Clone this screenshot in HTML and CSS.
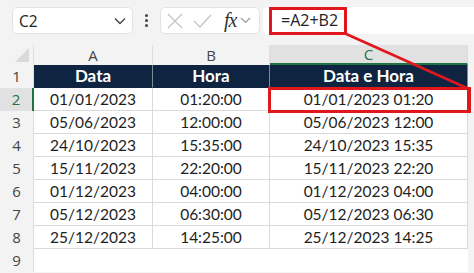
FILE: index.html
```html
<!DOCTYPE html>
<html lang="pt">
<head>
    <meta charset="UTF-8">
    <title>Data e Hora</title>
    <link rel="stylesheet" href="styles.css">
</head>
<body>
    <div class="toolbar">
        <div class="name-box">
            <span>C2</span>
            <svg class="chev" width="12" height="8" viewBox="0 0 12 8"><path d="M1 1.5 L6 6.5 L11 1.5" fill="none" stroke="#444" stroke-width="1.4"/></svg>
        </div>
        <div class="dots"><i></i><i></i><i></i></div>
        <div class="fx-box">
            <svg width="16" height="16" viewBox="0 0 16 16"><path d="M1 1 L15 15 M15 1 L1 15" stroke="#c4c4c4" stroke-width="1.3"/></svg>
            <svg width="19" height="14" viewBox="0 0 19 14"><path d="M1 7 L7 13 L18 1" fill="none" stroke="#c4c4c4" stroke-width="1.3"/></svg>
            <span class="fx">fx</span>
            <svg width="11" height="7" viewBox="0 0 11 7"><path d="M1 1 L5.5 5.5 L10 1" fill="none" stroke="#999" stroke-width="1.2"/></svg>
        </div>
        <div class="formula">=A2+B2</div>
    </div>

    <div class="sheet">
        <div class="corner"><span class="tri"></span></div>
        <div class="col-head">A</div>
        <div class="col-head">B</div>
        <div class="col-head active">C</div>
        <div class="col-head rest"></div>

        <div class="row-head">1</div>
        <div class="cell title">Data</div>
        <div class="cell title">Hora</div>
        <div class="cell title">Data e Hora</div>
        <div class="blank"></div>

        <div class="row-head active">2</div>
        <div class="cell">01/01/2023</div>
        <div class="cell">01:20:00</div>
        <div class="cell selected">01/01/2023 01:20</div>
        <div class="blank"></div>

        <div class="row-head">3</div>
        <div class="cell">05/06/2023</div>
        <div class="cell">12:00:00</div>
        <div class="cell">05/06/2023 12:00</div>
        <div class="blank"></div>

        <div class="row-head">4</div>
        <div class="cell">24/10/2023</div>
        <div class="cell">15:35:00</div>
        <div class="cell">24/10/2023 15:35</div>
        <div class="blank"></div>

        <div class="row-head">5</div>
        <div class="cell">15/11/2023</div>
        <div class="cell">22:20:00</div>
        <div class="cell">15/11/2023 22:20</div>
        <div class="blank"></div>

        <div class="row-head">6</div>
        <div class="cell">01/12/2023</div>
        <div class="cell">04:00:00</div>
        <div class="cell">01/12/2023 04:00</div>
        <div class="blank"></div>

        <div class="row-head">7</div>
        <div class="cell">05/12/2023</div>
        <div class="cell">06:30:00</div>
        <div class="cell">05/12/2023 06:30</div>
        <div class="blank"></div>

        <div class="row-head">8</div>
        <div class="cell">25/12/2023</div>
        <div class="cell">14:25:00</div>
        <div class="cell">25/12/2023 14:25</div>
        <div class="blank"></div>

        <div class="row-head">9</div>
        <div class="empty"></div>
        <div class="empty"></div>
        <div class="empty"></div>
        <div class="blank"></div>
    </div>

    <!-- red annotation -->
    <div class="mark mark-formula"></div>
    <div class="mark mark-cell"></div>
    <svg class="arrow" width="474" height="273" viewBox="0 0 474 273">
        <line x1="344" y1="33" x2="469" y2="89" stroke="#e0181e" stroke-width="2.5"/>
    </svg>
</body>
</html>
```

FILE: styles.css
```css
body {
    margin: 0;
    width: 474px;
    height: 273px;
    overflow: hidden;
    background-color: #f3f3f3;
    font-family: "Open Sans", sans-serif;
    position: relative;
}

.toolbar {
    height: 45px;
    box-sizing: border-box;
    padding: 7px 0 0 12px;
    display: flex;
    align-items: flex-start;
}

.name-box {
    width: 121px;
    height: 27px;
    box-sizing: border-box;
    background-color: #ffffff;
    border: 1px solid #e3e3e3;
    border-radius: 5px;
    display: flex;
    align-items: center;
    justify-content: space-between;
    padding: 0 6px 0 6px;
    font-size: 15.5px;
    color: #222;
}

.dots {
    width: 27px;
    height: 27px;
    display: flex;
    flex-direction: column;
    align-items: center;
    justify-content: center;
    gap: 2px;
}

.dots i {
    width: 3px;
    height: 3px;
    border-radius: 50%;
    background-color: #444;
}

.fx-box {
    width: 100px;
    height: 27px;
    box-sizing: border-box;
    background-color: #ffffff;
    border: 1px solid #e3e3e3;
    border-radius: 5px;
    display: flex;
    align-items: center;
    gap: 10px;
    padding-left: 6px;
}

.fx {
    font-family: "Liberation Serif", serif;
    font-style: italic;
    font-size: 20px;
    color: #333;
    margin-left: 2px;
    margin-right: -6px;
    letter-spacing: -1px;
}

.formula {
    flex: 1;
    height: 27px;
    margin-left: 3px;
    background-color: #ffffff;
    border-radius: 5px 0 0 5px;
    font-size: 16px;
    color: #222;
    line-height: 27px;
    padding-left: 18px;
}

.sheet {
    display: grid;
    grid-template-columns: 34px 119px 117px 198px 6px;
    grid-template-rows: 20px repeat(9, 23px);
    font-family: "Lato", sans-serif;
}

.corner {
    position: relative;
    border-right: 1px solid #dcdcdc;
}

.corner .tri {
    position: absolute;
    right: 4px;
    bottom: 3px;
    width: 0;
    height: 0;
    border-left: 14px solid transparent;
    border-bottom: 14px solid #dadada;
}

.col-head {
    font-family: "Open Sans", sans-serif;
    font-size: 15px;
    color: #444;
    text-align: center;
    line-height: 20px;
    border-right: 1px solid #dcdcdc;
    background-color: #f3f3f3;
}

.col-head.active {
    background-color: #e1e1e1;
    color: #217346;
    border-bottom: 2px solid #217346;
    line-height: 19px;
}

.col-head.rest {
    border-right: none;
}

.row-head {
    font-family: "Open Sans", sans-serif;
    font-size: 15px;
    color: #444;
    text-align: center;
    line-height: 23px;
    border-right: 1px solid #dcdcdc;
}

.row-head.active {
    background-color: #e1e1e1;
    color: #217346;
    border-right: 2px solid #217346;
}

.cell {
    background-color: #ffffff;
    font-size: 15.5px;
    color: #1e1e1e;
    text-align: center;
    line-height: 22px;
    border-right: 1px solid #dadada;
    border-bottom: 1px solid #dadada;
}

.cell.title {
    background-color: #0e2441;
    color: #ffffff;
    font-weight: bold;
    font-size: 17px;
    border-right-color: #7f8a99;
    border-bottom-color: #0e2441;
}

.cell.selected {
    outline: 1px solid #217346;
    outline-offset: -1px;
}

.empty {
    background-color: #ffffff;
}

.blank {
    background-color: #f3f3f3;
}

.mark {
    position: absolute;
    border: 3px solid #e0181e;
    box-sizing: border-box;
}

.mark-formula {
    left: 269px;
    top: 7px;
    width: 78px;
    height: 28px;
}

.mark-cell {
    left: 268px;
    top: 87px;
    width: 203px;
    height: 26px;
}

.arrow {
    position: absolute;
    left: 0;
    top: 0;
}
```
